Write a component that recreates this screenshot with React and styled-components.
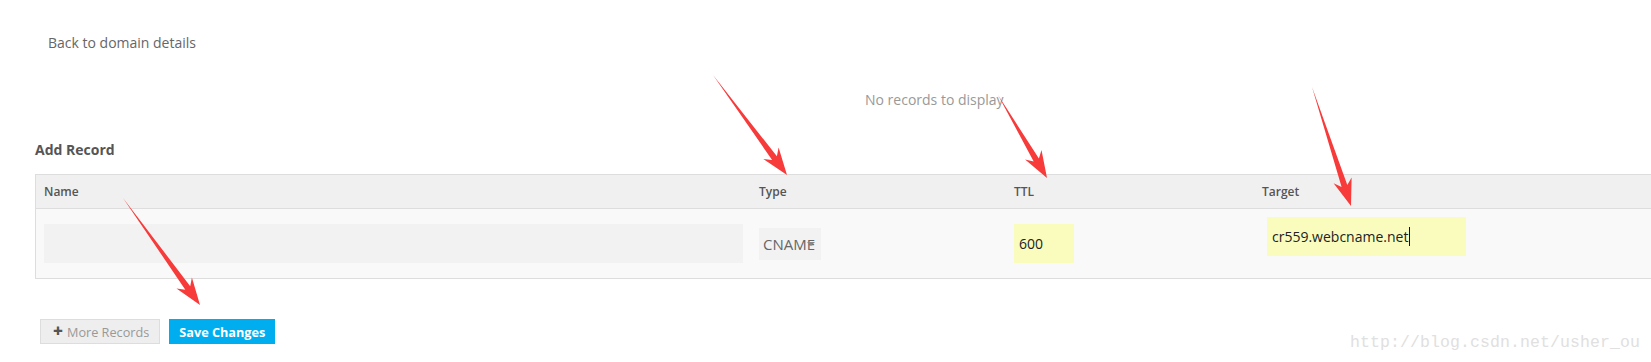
import React from 'react'
import styled, { createGlobalStyle } from 'styled-components'

const GlobalStyle = createGlobalStyle`
  html, body {
    margin: 0;
    padding: 0;
    background: #fff;
  }
  body {
    font-family: "Open Sans", "Liberation Sans", sans-serif;
  }
`

const Page = styled.div`
  position: relative;
  width: 100%;
  height: 362px;
  overflow: hidden;
  padding-left: 35px;
  box-sizing: border-box;
`

const BackLink = styled.div`
  margin-top: 33px;
  padding-left: 13px;
  font-size: 14px;
  line-height: 20px;
  color: #666;
`

const Empty = styled.div`
  margin-top: 37px;
  padding-left: 830px;
  font-size: 14px;
  line-height: 20px;
  color: #999;
`

const Title = styled.h3`
  margin: 30px 0 0;
  font-size: 14px;
  line-height: 20px;
  font-weight: 700;
  color: #555;
`

const Table = styled.div`
  margin-top: 14px;
  border: 1px solid #ddd;
  border-right: none;
`

const Row = styled.div`
  display: grid;
  grid-template-columns: 715px 255px 248px 1fr;
  align-items: center;
  height: ${p => p.h}px;
  background: ${p => p.bg};
  border-top: ${p => (p.divider ? '1px solid #ddd' : 'none')};
`

const Head = styled.div`
  padding-left: 8px;
  font-size: 12px;
  font-weight: 600;
  color: #555;
  line-height: 16px;
`

const Cell = styled.div`
  padding-left: 8px;
  display: flex;
  align-items: center;
`

const Field = styled.div`
  box-sizing: border-box;
  width: ${p => p.w}px;
  height: ${p => p.h || 39}px;
  padding-left: 5px;
  margin: ${p => p.m || '0'};
  background: ${p => (p.filled ? '#fafcbe' : '#f2f2f2')};
  display: flex;
  align-items: center;
  font-size: 14px;
  color: #222;
`

const Select = styled.div`
  position: relative;
  box-sizing: border-box;
  width: 62px;
  height: 32px;
  padding-left: 4px;
  background: #f2f2f2;
  display: flex;
  align-items: center;
  font-size: 15px;
  color: #666;
`

const Arrow = styled.span`
  position: absolute;
  left: 48px;
  top: 14px;
  width: 0;
  height: 0;
  border-left: 4px solid transparent;
  border-right: 4px solid transparent;
  border-top: 4px solid #888;
`

const Caret = styled.span`
  display: inline-block;
  width: 1px;
  height: 19px;
  margin-left: 1px;
  background: #111;
`

const Actions = styled.div`
  margin-top: 40px;
  padding-left: 5px;
  display: flex;
  gap: 9px;
`

const Button = styled.button`
  box-sizing: border-box;
  height: 25px;
  padding: ${p => (p.primary ? '0 9px' : '0 10px 0 12px')};
  border: 1px solid ${p => (p.primary ? '#00aeef' : '#ddd')};
  background: ${p => (p.primary ? '#00aeef' : '#eee')};
  color: ${p => (p.primary ? '#fff' : '#999')};
  font-family: "Open Sans", "Liberation Sans", sans-serif;
  font-size: 12.7px;
  font-weight: ${p => (p.primary ? 700 : 400)};
  display: flex;
  align-items: center;
  gap: 4px;
  cursor: pointer;
`

const Plus = styled.span`
  font-size: 17px;
  font-weight: 800;
  color: #555;
  line-height: 1;
  margin-top: -2px;
`

const Watermark = styled.div`
  position: absolute;
  left: 1350px;
  top: 333px;
  font-family: "Liberation Mono", monospace;
  font-size: 16.5px;
  line-height: 20px;
  color: #e0e0e0;
  letter-spacing: 0.1px;
`

const Overlay = styled.svg`
  position: absolute;
  left: 0;
  top: 0;
  pointer-events: none;
`

const arrows = [
  [713, 75, 787, 175],
  [998, 95, 1047, 178],
  [1312, 87, 1351, 206],
  [123, 198, 200, 305],
]

function arrowPoints([x1, y1, x2, y2]) {
  const dx = x2 - x1
  const dy = y2 - y1
  const len = Math.hypot(dx, dy)
  const ux = dx / len
  const uy = dy / len
  const nx = -uy
  const ny = ux
  const head = 27
  const notch = 21
  const bx = x2 - ux * head
  const by = y2 - uy * head
  const cx = x2 - ux * notch
  const cy = y2 - uy * notch
  const pts = [
    [x1, y1],
    [cx + nx * 3, cy + ny * 3],
    [bx + nx * 9.5, by + ny * 9.5],
    [x2, y2],
    [bx - nx * 9.5, by - ny * 9.5],
    [cx - nx * 3, cy - ny * 3],
  ]
  return pts.map(p => p.map(v => v.toFixed(1)).join(',')).join(' ')
}

const App = () => {
  return (
    <Page>
      <GlobalStyle />
      <BackLink>Back to domain details</BackLink>
      <Empty>No records to display</Empty>
      <Title>Add Record</Title>
      <Table>
        <Row h={33} bg="#f0f0f0">
          <Head>Name</Head>
          <Head>Type</Head>
          <Head>TTL</Head>
          <Head>Target</Head>
        </Row>
        <Row h={69} bg="#f9f9f9" divider>
          <Cell>
            <Field w={699} />
          </Cell>
          <Cell>
            <Select>
              CNAME
              <Arrow />
            </Select>
          </Cell>
          <Cell>
            <Field w={60} filled>600</Field>
          </Cell>
          <Cell>
            <Field w={199} filled m="0 0 14px 5px">
              cr559.webcname.net
              <Caret />
            </Field>
          </Cell>
        </Row>
      </Table>
      <Actions>
        <Button>
          <Plus>+</Plus> More Records
        </Button>
        <Button primary>Save Changes</Button>
      </Actions>
      <Watermark>http://blog.csdn.net/usher_ou</Watermark>
      <Overlay width="1651" height="362" viewBox="0 0 1651 362">
        {arrows.map((a, i) => (
          <polygon key={i} points={arrowPoints(a)} fill="#f73a3a" />
        ))}
      </Overlay>
    </Page>
  )
}

export default App
